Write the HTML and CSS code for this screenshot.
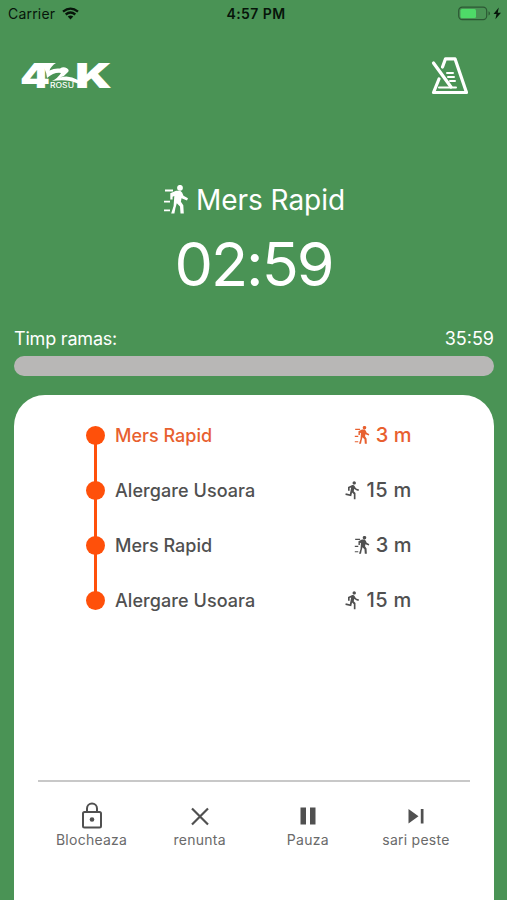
FILE: index.html
```html
<!DOCTYPE html>
<html lang="ro">
<head>
<meta charset="utf-8">
<title>42K Rosu</title>
<link rel="stylesheet" href="styles.css">
</head>
<body>
<svg class="defs" width="0" height="0" aria-hidden="true">
  <symbol id="walk" viewBox="0 0 24 29">
    <circle cx="16" cy="2.800" r="2.900"/>
    <path d="M6.300 14.500V8.300L12 5.800h4.200l1.900 1.700 1.400 3.300 4.500 2.400-1 2.200-5.500-2.200-.6 3.500 2.400 3.600.5 8.200h-3.300l-.5-7-3.200-3.300-1.400 5L10.400 28.500H7.200l2.400-7.500.7-10.100-1.700.8v2.800z"/>
    <path d="M1 4.600h8v1.800H1zM0 15.800h6v1.800H0zM0 24.400h6v1.800H0z"/>
  </symbol>
  <symbol id="run" viewBox="0 0 24 24">
    <path d="M13.490 5.480c1.100 0 2-.9 2-2s-.9-2-2-2-2 .9-2 2 .9 2 2 2zm-3.600 13.900l1-4.400 2.100 2v6h2v-7.500l-2.100-2 .6-3c1.300 1.500 3.300 2.500 5.500 2.500v-2c-1.900 0-3.500-1-4.300-2.400l-1-1.600c-.4-.6-1-1-1.700-1-.3 0-.5.1-.8.1l-5.200 2.200v4.700h2v-3.400l1.800-.7-1.600 8.100-4.900-1-.4 2 7 1.400z"/>
  </symbol>
</svg>
<main class="screen">
  <header class="status">
    <div class="carrier"><span>Carrier</span>
      <svg width="17" height="13" viewBox="0 0 17 13" fill="none" stroke="#07150a" stroke-width="2.300"><path d="M1 4.700Q8.500-1.500 16 4.700M3.700 7.500Q8.500 3.500 13.300 7.500"/><path d="M5.700 9.500Q8.500 7.300 11.300 9.500L8.500 12.500z" fill="#07150a" stroke="none"/></svg>
    </div>
    <div class="clock">4:57 PM</div>
    <div class="power">
      <svg width="44" height="15" viewBox="0 0 44 15"><rect x=".7" y="1.100" width="28" height="12.600" rx="3.600" fill="none" stroke="#2c5834" stroke-width="1.200"/><rect x="2.500" y="2.900" width="15.500" height="9" rx="1.500" fill="#4edb68"/><path d="M30.500 5.200q1.500.6 1.500 2.200t-1.500 2.200z" fill="#2c5834"/><path d="M40.800 1.500L35.500 8h3L37.400 13.300 43 6.700h-3.300z" fill="#07150a"/></svg>
    </div>
  </header>
  <div class="brand">
    <svg class="logo" width="100" height="44" viewBox="0 -8 100 44" fill="#fff">
      <text class="mark" x="1" y="26" font-size="34.500" textLength="30" lengthAdjust="spacingAndGlyphs">4</text>
      <path d="M20 1H37Q32 4 30.500 8.500Q36 5.800 41 6.600A4.700 2.900 0 1 1 48.500 10.500Q46 14 41 15.500Q50 12.500 59 18V21.500Q48 16.500 33 19Q39 16 42 11Q35 10 28 16Q27.500 6 20 1z"/>
      <text class="mark" x="56" y="26" font-size="34.500" textLength="37" lengthAdjust="spacingAndGlyphs">K</text>
      <text class="rosu" x="31" y="26.200" textLength="24" lengthAdjust="spacingAndGlyphs">ROSU</text>
    </svg>
    <svg class="metronome" width="38" height="40" viewBox="0 0 38 40" fill="none" stroke="#fff" stroke-width="3.200" stroke-linecap="round" stroke-linejoin="round"><path d="M11.500 10L14.500 1.800H24L35.500 35.500H2.500L8 22"/><path d="M2.500 6L20 30"/><path d="M8 30.500h17M16 16h6M17 20h6M19 24h5" stroke-width="2"/></svg>
  </div>
  <section class="current">
    <h1><svg width="24" height="29"><use href="#walk"/></svg><span>Mers Rapid</span></h1>
    <div class="timer">02:59</div>
  </section>
  <section class="remaining">
    <div class="labels"><span class="left">Timp ramas:</span><span>35:59</span></div>
    <div class="track"></div>
  </section>
  <section class="card">
    <ol class="steps">
      <li class="active"><i class="dot"></i><span>Mers Rapid</span><span class="time"><svg width="16" height="18" viewBox="0 0 24 29"><use href="#walk"/></svg><b>3 m</b></span></li>
      <li><i class="dot"></i><span class="long">Alergare Usoara</span><span class="time run"><svg width="20" height="20"><use href="#run"/></svg><b>15 m</b></span></li>
      <li><i class="dot"></i><span>Mers Rapid</span><span class="time"><svg width="16" height="18" viewBox="0 0 24 29"><use href="#walk"/></svg><b>3 m</b></span></li>
      <li><i class="dot"></i><span class="long">Alergare Usoara</span><span class="time run"><svg width="20" height="20"><use href="#run"/></svg><b>15 m</b></span></li>
    </ol>
    <nav class="actions">
      <button><svg width="24" height="28" viewBox="0 0 24 28" fill="none" stroke="#505050" stroke-width="2"><rect x="3" y="10" width="18" height="15.500" rx="1.500"/><path d="M7 10V6.500a5 5 0 0 1 10 0V10"/><circle cx="12" cy="17.500" r="2.300" fill="#505050" stroke="none"/></svg><span>Blocheaza</span></button>
      <button><svg width="24" height="28" viewBox="0 0 24 28" fill="none" stroke="#505050" stroke-width="2.200"><path d="M4 6.500L20 22.500M20 6.500L4 22.500"/></svg><span>renunta</span></button>
      <button><svg width="24" height="28" viewBox="0 0 24 28" fill="#505050"><path d="M4.500 5.500H10v17H4.500zM14 5.500h5.500v17H14z"/></svg><span>Pauza</span></button>
      <button><svg width="24" height="28" viewBox="0 0 24 28" fill="#505050"><path d="M4.500 7L14.500 14.200 4.500 21.500zM16.800 7h2.700v14.500h-2.700z"/></svg><span>sari peste</span></button>
    </nav>
  </section>
</main>
</body>
</html>
```

FILE: styles.css
```css
* { box-sizing: border-box; }
body { margin: 0; font-family: Inter, "Liberation Sans", sans-serif; background: #4a9355; }
.defs { position: absolute; }
svg { display: block; flex: none; }
.screen { height: 900px; overflow: hidden; display: flex; flex-direction: column; padding: 0 13px; color: #fff; }
.status { height: 28px; margin: 0 -13px; padding: 0 4px 1px 8px; display: grid; grid-template-columns: 1fr auto 1fr; align-items: center; color: #07150a; font-size: 14px; }
.carrier { display: flex; align-items: center; gap: 7px; letter-spacing: 0.2px; }
.clock { font-weight: 600; letter-spacing: 0.4px; padding-left: 1px; }
.power { justify-self: end; margin-right: 1px; }
.brand { height: 76px; display: flex; justify-content: space-between; padding: 29px 25px 0 6px; }
.logo { margin-top: -3px; overflow: visible; }
.mark { font-family: Inter, sans-serif; font-weight: 900; }
.rosu { font-size: 7px; font-weight: 500; }
.current { padding-top: 78px; height: 222px; }
h1 { margin: 0; height: 36px; display: flex; align-items: center; justify-content: center; gap: 8px; padding-left: 2px; font-size: 28px; font-weight: 400; letter-spacing: -0.05px; }
h1 svg { margin-top: -2px; }
.timer { height: 94px; line-height: 92px; text-align: center; font-size: 61px; font-weight: 400; letter-spacing: -2px; }
.labels { height: 30px; display: flex; justify-content: space-between; align-items: center; padding: 0 0 6px 1px; font-size: 18px; }
.left { letter-spacing: -0.2px; }
.track { height: 20px; border-radius: 10px; background: #b8b7b6; margin-left: 0.5px; }
.card { flex: 1; margin: 19px 0 0 0.5px; border-radius: 31px 31px 0 0; background: #fff; padding: 12.500px 24px 0; color: #505050; display: flex; flex-direction: column; }
.steps { list-style: none; margin: 0; padding: 0 58.500px 0 48.500px; height: 372.500px; font-weight: 500; }
.steps li { position: relative; height: 55px; display: flex; align-items: center; font-size: 18px; }
.long { letter-spacing: 0.07px; }
.steps .active { color: #e8602f; }
.dot { position: relative; width: 19px; height: 19px; border-radius: 50%; background: #ff500a; margin-right: 10px; }
li:not(:last-child) .dot::after { content: ""; position: absolute; left: 8px; top: 18px; width: 3px; height: 38px; background: #ff500a; }
.time { margin-left: auto; display: flex; align-items: center; gap: 6px; font-size: 20px; }
.run { gap: 4px; }
.run b { letter-spacing: 0.3px; }
.time b { font-weight: 500; }
.time svg, h1 svg { fill: currentColor; }
.actions { border-top: 2px solid #c8c8c8; display: grid; grid-template-columns: repeat(4, 1fr); padding-top: 20px; }
button { border: 0; background: none; padding: 0; font: 400 14px Inter, sans-serif; letter-spacing: 0.25px; color: #6a6a6a; display: flex; flex-direction: column; align-items: center; }
button span { line-height: 20px; }
```
